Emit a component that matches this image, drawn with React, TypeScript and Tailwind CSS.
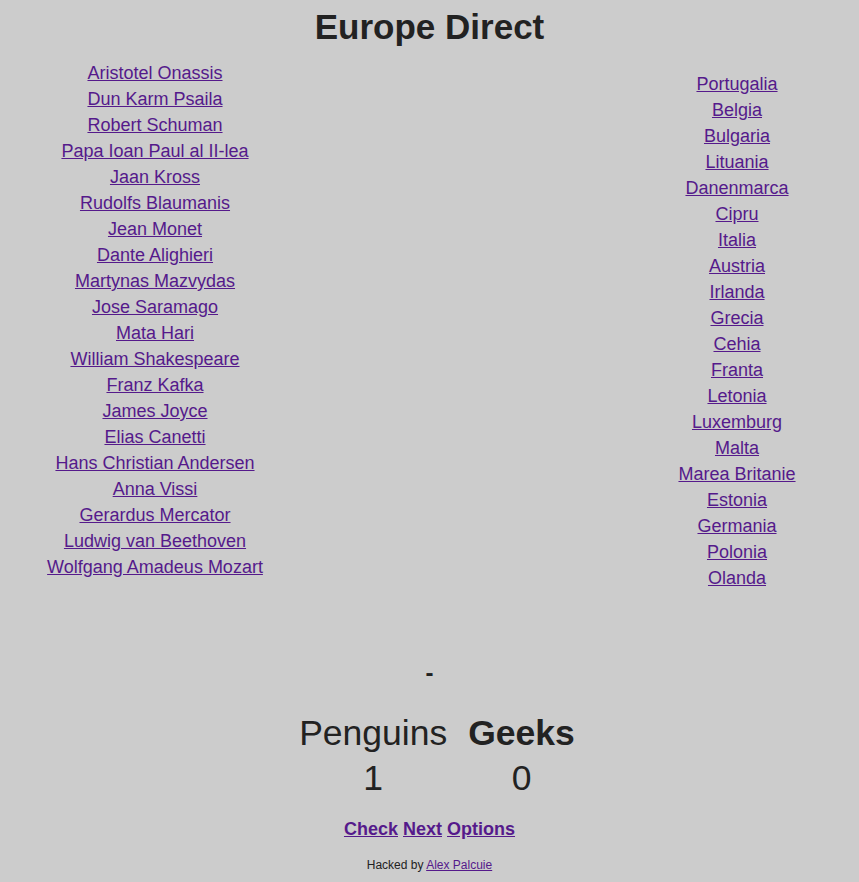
import React from "react";

const people = [
  "Aristotel Onassis",
  "Dun Karm Psaila",
  "Robert Schuman",
  "Papa Ioan Paul al II-lea",
  "Jaan Kross",
  "Rudolfs Blaumanis",
  "Jean Monet",
  "Dante Alighieri",
  "Martynas Mazvydas",
  "Jose Saramago",
  "Mata Hari",
  "William Shakespeare",
  "Franz Kafka",
  "James Joyce",
  "Elias Canetti",
  "Hans Christian Andersen",
  "Anna Vissi",
  "Gerardus Mercator",
  "Ludwig van Beethoven",
  "Wolfgang Amadeus Mozart",
];

const countries = [
  "Portugalia",
  "Belgia",
  "Bulgaria",
  "Lituania",
  "Danenmarca",
  "Cipru",
  "Italia",
  "Austria",
  "Irlanda",
  "Grecia",
  "Cehia",
  "Franta",
  "Letonia",
  "Luxemburg",
  "Malta",
  "Marea Britanie",
  "Estonia",
  "Germania",
  "Polonia",
  "Olanda",
];

export default function App() {
  return (
    <div
      className="min-h-[882px] w-full bg-[#cccccc] text-[#222222]"
      style={{ fontFamily: '"Liberation Sans", Arial, sans-serif' }}
    >
      <h1 className="pt-[7px] text-center text-[35px] font-bold leading-[40px]">
        Europe Direct
      </h1>
      <div className="mt-[13px] flex">
        <div className="flex w-[310px] flex-col items-center">
          {people.map((p) => (
            <a
              key={p}
              href="#"
              className="text-[18px] leading-[26px] text-[#551a8b] underline"
            >
              {p}
            </a>
          ))}
        </div>
        <div className="flex-1" />
        <div className="flex w-[244px] flex-col items-center pt-[11px]">
          {countries.map((c) => (
            <a
              key={c}
              href="#"
              className="text-[18px] leading-[26px] text-[#551a8b] underline"
            >
              {c}
            </a>
          ))}
        </div>
      </div>
      <div className="mt-[67px] text-center text-[24px] font-bold leading-[30px]">-</div>
      <div className="mt-[25px] flex justify-center pl-[15px]">
        <div className="grid grid-cols-[auto_auto] gap-x-[21px] gap-y-[5px] text-center text-[35.5px] leading-[40px]">
          <div>Penguins</div>
          <div className="font-bold">Geeks</div>
          <div>1</div>
          <div>0</div>
        </div>
      </div>
      <div className="mt-[19px] flex justify-center gap-[5px] text-[18px] font-bold leading-[24px]">
        <a href="#" className="text-[#551a8b] underline">
          Check
        </a>
        <a href="#" className="text-[#551a8b] underline">
          Next
        </a>
        <a href="#" className="text-[#551a8b] underline">
          Options
        </a>
      </div>
      <div className="mt-[16px] pb-[10px] text-center text-[12px] leading-[16px]">
        Hacked by{" "}
        <a href="#" className="text-[#551a8b] underline">
          Alex Palcuie
        </a>
      </div>
    </div>
  );
}
